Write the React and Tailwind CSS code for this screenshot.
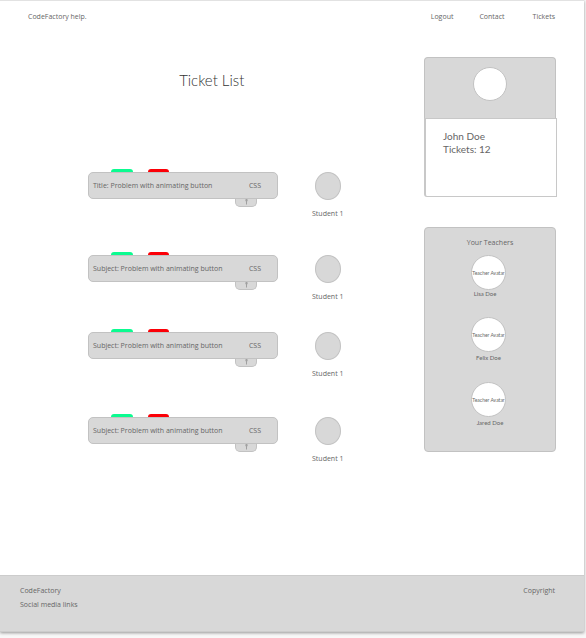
const tickets = [
  { label: "Title: Problem with animating button", space: "mb-8" },
  { label: "Subject: Problem with animating button", space: "mb-[26px]" },
  { label: "Subject: Problem with animating button", space: "mb-[34px]" },
  { label: "Subject: Problem with animating button", space: "" },
];

const teachers = [
  { name: "Lisa Doe", style: "pr-[7px]", space: "mb-[19px]" },
  { name: "Felix Doe", style: "mt-0.5", space: "mb-5" },
  { name: "Jared Doe", style: "mt-0.5 pl-[3px]", space: "" },
];

function Ticket({ label, space }) {
  return (
    <li className={`flex gap-[34px] ${space}`}>
      <div className="flex w-[190px] flex-col">
        <div className="flex h-[3px] gap-[15px] pl-[23px]">
          <button type="button" aria-label="Accept" className="w-[22px] rounded-t-[3px] bg-[#0bfb90]" />
          <button type="button" aria-label="Close" className="w-[21px] rounded-t-[3px] bg-[#fb0007]" />
        </div>
        <div className="flex h-[27px] items-center justify-between rounded-[5px] border border-[#c2c2c2] bg-[#d8d8d8] pr-4 pl-1">
          <span>{label}</span>
          <span>CSS</span>
        </div>
        <button
          type="button"
          aria-label="Expand"
          className="mr-[21px] flex h-2 w-[22px] justify-center self-end rounded-b-[5px] border border-t-0 border-[#c2c2c2] bg-[#d8d8d8]"
        >
          <svg width="5" height="6" viewBox="0 0 5 6" aria-hidden="true">
            <path d="M1 0.5h3L3.2 2.5H1.8z" fill="#a0a0a0" />
            <path d="M2.5 0v5.5" fill="none" stroke="#a0a0a0" strokeWidth="1" />
          </svg>
        </button>
      </div>
      <div className="flex flex-col items-center pt-[3px]">
        <div className="h-7 w-[26px] rounded-[50%] border border-[#c2c2c2] bg-[#d8d8d8]" />
        <span className="mt-2 leading-3 whitespace-nowrap">Student 1</span>
      </div>
    </li>
  );
}

function Teacher({ name, style, space }) {
  return (
    <li className={`flex flex-col items-center font-['Lato',sans-serif] ${space}`}>
      <div className="flex size-[35px] items-center justify-center rounded-full border border-[#c2c2c2] bg-white text-[5px] leading-[6px] whitespace-nowrap">
        Teacher Avatar
      </div>
      <span className={`text-[6px] leading-2 ${style}`}>{name}</span>
    </li>
  );
}

export default function App() {
  return (
    <div className="bg-[#f8f8f8] pr-0.5 pb-1.5 font-['Open_Sans',sans-serif] text-[7px] leading-[14px] text-[#666666]">
      <div className="border-t border-[#e2e2e2] bg-white shadow-[0_1px_3px_rgba(0,0,0,0.4)]">
        <header className="flex justify-between pt-[9px] pr-[29px] pl-7">
          <a href="#home">CodeFactory help.</a>
          <nav className="flex">
            <a href="#logout" className="mr-[26px]">Logout</a>
            <a href="#contact" className="mr-7">Contact</a>
            <a href="#tickets">Tickets</a>
          </nav>
        </header>

        <main className="flex justify-between pt-[33px] pr-7 pb-[110px] pl-[88px]">
          <section className="pt-[13px]">
            <h1 className="mb-[78px] pr-2 text-center font-['Lato',sans-serif] text-[15px] leading-[21px] font-light text-[#333333]">
              Ticket List
            </h1>
            <ul>
              {tickets.map((ticket, i) => (
                <Ticket key={i} {...ticket} />
              ))}
            </ul>
          </section>

          <aside className="w-[132px]">
            <section className="mb-[30px]">
              <div className="flex h-[61px] justify-center rounded-t-[4px] border border-b-0 border-[#c2c2c2] bg-[#d8d8d8] pt-[9px]">
                <div className="size-[34px] rounded-full border border-[#c2c2c2] bg-white" />
              </div>
              <div className="-mr-px h-[79px] rounded-bl-[3px] border border-l-2 border-[#c8c8c8] bg-white pt-[11px] pl-[17px] font-['Lato',sans-serif] text-[10px] leading-[13px]">
                <p>John Doe</p>
                <p>Tickets: 12</p>
              </div>
            </section>
            <section className="h-[225px] rounded-[4px] border border-[#c2c2c2] bg-[#d8d8d8] pt-2">
              <h2 className="mb-[5px] text-center">Your Teachers</h2>
              <ul className="pr-[3px]">
                {teachers.map((teacher) => (
                  <Teacher key={teacher.name} {...teacher} />
                ))}
              </ul>
            </section>
          </aside>
        </main>

        <footer className="flex h-[57px] justify-between border-y border-[#cccccc] bg-[#d8d8d8] pt-2 pr-[29px] pl-5">
          <div>
            <p>CodeFactory</p>
            <a href="#social" className="block">Social media links</a>
          </div>
          <p>Copyright</p>
        </footer>
      </div>
    </div>
  );
}
